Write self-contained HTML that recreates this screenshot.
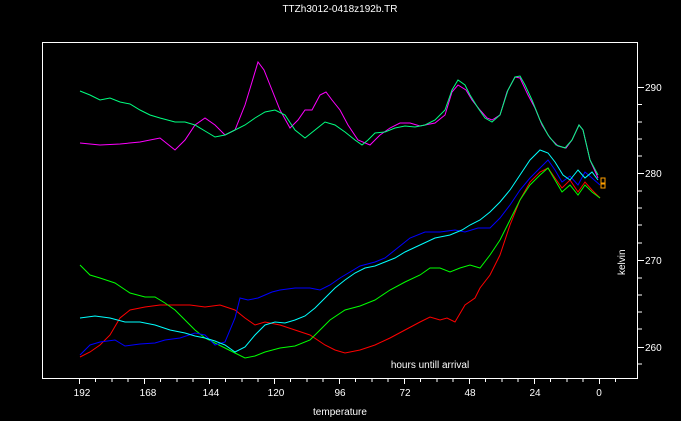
<!DOCTYPE html>
<html><head><meta charset="utf-8"><style>
html,body{margin:0;padding:0;background:#000;width:681px;height:421px;overflow:hidden}
svg{display:block}
text{font-family:"Liberation Sans","DejaVu Sans",sans-serif;fill:#fff;font-size:10px}
</style></head><body>
<svg width="681" height="421" viewBox="0 0 681 421">
<text x="340" y="12" text-anchor="middle">TTZh3012-0418z192b.TR</text>
<rect x="42.5" y="42.5" width="595" height="336" fill="none" stroke="#fff" stroke-width="1"/>
<g stroke="#fff" stroke-width="1">
<path d="M638 87.5h6M638 104.5h4M638 122h4M638 139h4M638 156h4M638 173.5h6M638 191h4M638 208h4M638 225h4M638 243h4M638 260.5h6M638 278h4M638 295h4M638 312h4M638 329h4M638 347.5h6M638 364h4"/>
<path d="M79.5 378v6M95.5 378v4M112 378v4M128 378v4M144.5 378v6M160.5 378v4M177 378v4M193 378v4M209.5 378v6M225.5 378v4M242 378v4M258 378v4M274.5 378v6M290.5 378v4M307 378v4M323 378v4M339.5 378v6M355.5 378v4M372 378v4M388 378v4M404.5 378v6M420.5 378v4M437 378v4M453 378v4M469.5 378v6M485.5 378v4M502 378v4M518 378v4M534.5 378v6M550.5 378v4M567 378v4M583 378v4M599.5 378v6M615.5 378v4"/>
</g>
<text x="645" y="91">290</text><text x="645" y="177">280</text><text x="645" y="264">270</text><text x="645" y="351">260</text>
<g text-anchor="middle">
<text x="82" y="396">192</text><text x="148" y="396">168</text><text x="211" y="396">144</text><text x="276" y="396">120</text><text x="340" y="396">96</text><text x="405" y="396">72</text><text x="470" y="396">48</text><text x="535" y="396">24</text><text x="599" y="396">0</text>
<text x="340" y="415">temperature</text>
<text x="430" y="368">hours untill arrival</text>
</g>
<text transform="translate(625,275) rotate(-90)">kelvin</text>
<g fill="none" stroke-width="1">
<polyline stroke="#ff00ff" points="80,143 100,145 120,144 140,142 160,138 175,150 185,140 195,125 205,118 215,125 225,135 235,130 245,105 252,82 258,62 264,70 272,90 280,110 290,128 298,120 305,110 312,110 320,95 326,92 332,100 340,110 348,125 358,140 370,145 380,135 390,128 400,123 410,123 420,126 435,123 445,115 452,92 458,85 466,90 472,100 480,110 487,118 492,120 500,115 507,92 515,77 520,78 528,95 535,108 542,125 550,138 558,146 566,148 572,140 579,125 583,130 590,160 598,178"/>
<polyline stroke="#00ff80" points="80,91 90,95 100,100 110,98 120,102 130,104 140,110 150,115 160,118 175,122 185,122 195,125 205,131 215,137 225,135 235,130 245,125 255,118 265,112 275,110 285,115 295,130 305,138 315,130 325,122 335,125 345,132 355,140 362,145 368,140 375,133 385,132 395,128 405,126 415,127 425,125 435,120 445,110 452,90 458,80 465,85 470,95 478,108 485,118 492,122 500,115 508,90 515,77 520,76 525,85 532,100 540,120 548,135 556,145 565,148 572,140 579,125 583,130 590,160 598,175"/>
<polyline stroke="#ff0000" points="80,357 90,352 100,345 110,335 120,318 130,310 145,307 160,305 175,305 190,305 205,307 220,305 235,310 245,318 255,325 265,322 280,325 295,330 310,335 325,345 335,350 345,353 360,350 375,345 390,338 405,330 420,322 430,317 440,320 447,318 455,322 465,305 475,298 480,288 490,275 500,255 510,225 520,200 530,182 540,172 548,168 555,178 562,188 570,180 578,192 585,182 592,190 600,198"/>
<polyline stroke="#00ff00" points="80,265 90,275 100,278 115,283 130,293 145,297 155,297 165,303 175,310 185,320 195,330 205,338 215,343 225,348 235,353 245,358 255,356 265,352 280,348 295,346 310,340 320,330 330,320 345,310 360,306 375,300 390,290 405,282 420,275 430,268 440,268 450,272 460,268 470,265 480,268 490,255 500,240 510,220 520,200 530,185 540,175 548,168 555,180 562,192 570,185 578,195 585,185 592,192 600,198"/>
<polyline stroke="#0000ff" points="80,355 90,345 100,342 115,340 125,346 140,344 155,343 165,340 180,338 195,333 205,335 215,345 225,342 235,318 240,298 248,300 258,298 265,295 272,292 280,290 295,288 310,288 320,290 330,285 340,278 350,272 360,266 375,262 385,258 395,250 410,238 425,232 440,232 455,230 465,232 478,228 490,228 500,218 510,205 520,190 530,178 540,168 548,160 555,170 562,182 570,176 578,185 585,172 592,178 600,185"/>
<polyline stroke="#00ffff" points="80,318 95,316 110,318 125,322 140,322 155,325 170,330 185,333 195,336 205,338 215,341 225,345 235,352 245,347 255,335 265,325 275,322 285,323 295,320 305,316 315,308 325,298 335,288 345,280 355,273 365,268 375,266 385,262 395,258 405,252 420,245 435,238 450,235 462,230 470,225 480,220 490,212 500,202 510,190 520,175 530,160 540,150 548,153 555,162 563,175 570,180 578,170 585,178 592,172 598,180"/>
</g>
<rect x="601" y="178" width="4" height="5" fill="none" stroke="#ffa000"/>
<rect x="601" y="184" width="4" height="4" fill="none" stroke="#ffa000"/>
</svg>
</body></html>
